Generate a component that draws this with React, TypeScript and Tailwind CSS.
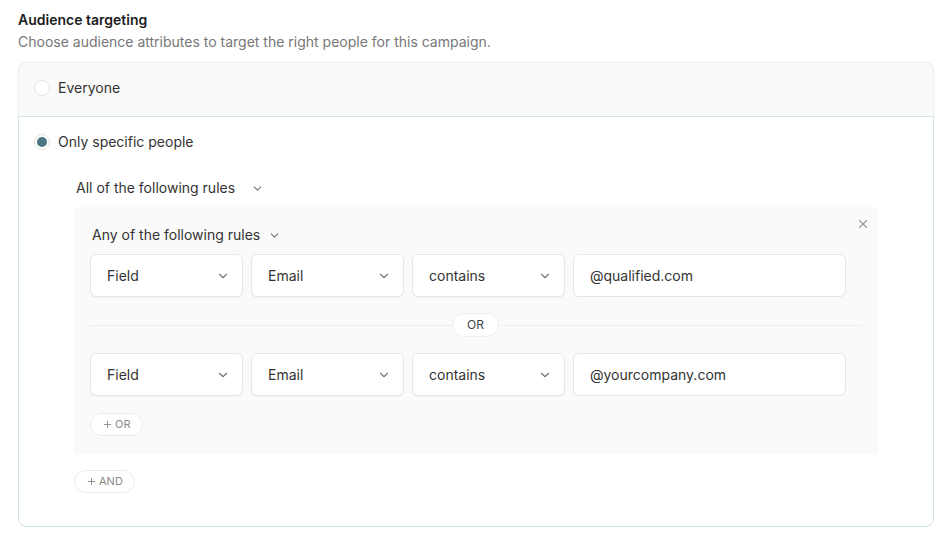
import { ChevronDown, X, Plus } from 'lucide-react';

function Radio({ checked }: { checked?: boolean }) {
    return (
        <span className="flex h-4 w-4 shrink-0 items-center justify-center rounded-full border border-[#e3e3e3] bg-white">
            {checked && <span className="h-[10px] w-[10px] rounded-full bg-[#4b7682]" />}
        </span>
    );
}

function Select({ label }: { label: string }) {
    return (
        <div className="flex h-[43px] w-[153px] items-center justify-between rounded-md border border-[#e6e6e6] bg-white pl-4 pr-3 text-sm text-[#333] shadow-[0_1px_1px_rgba(0,0,0,0.04)]">
            <span>{label}</span>
            <ChevronDown className="h-[14px] w-[14px] text-[#777]" strokeWidth={2} />
        </div>
    );
}

function RuleRow({ value }: { value: string }) {
    return (
        <div className="flex gap-2">
            <Select label="Field" />
            <Select label="Email" />
            <Select label="contains" />
            <div className="flex h-[43px] w-[273px] items-center rounded-md border border-[#e6e6e6] bg-white px-4 text-sm text-[#333]">
                {value}
            </div>
        </div>
    );
}

function AddPill({ label }: { label: string }) {
    return (
        <button className="flex h-[23px] items-center gap-[2px] rounded-full border border-[#ebebeb] bg-white px-[11px] text-[11px] text-[#8a8a8a]">
            <Plus className="h-[11px] w-[11px]" strokeWidth={2} />
            {label}
        </button>
    );
}

export default function App() {
    return (
        <div className="min-h-screen bg-white pl-[18px] pr-4 pt-[10px] font-['Inter',sans-serif]">
            <h2 className="text-sm font-semibold leading-5 text-[#1d1d1d]">Audience targeting</h2>
            <p className="mt-[2px] text-sm leading-5 text-[#777]">
                Choose audience attributes to target the right people for this campaign.
            </p>

            <div className="mt-[10px]">
                {/* Everyone option */}
                <div className="flex h-[54px] items-center gap-2 rounded-t-lg border border-b-0 border-[#efefef] bg-[#fafafa] pb-[3px] pl-[15px]">
                    <Radio />
                    <span className="text-sm text-[#333]">Everyone</span>
                </div>

                {/* Only specific people option */}
                <div className="rounded-b-lg border border-[#d3e5ea] pb-[33px] pl-[15px] pr-[55px] pt-[15px]">
                    <div className="flex h-5 items-center gap-2">
                        <Radio checked />
                        <span className="text-sm text-[#333]">Only specific people</span>
                    </div>

                    <div className="ml-10 mt-[26px]">
                        <div className="flex h-5 items-center gap-[16px] pl-[2px] text-sm text-[#333]">
                            All of the following rules
                            <ChevronDown className="h-[13px] w-[13px] text-[#777]" strokeWidth={2} />
                        </div>

                        <div className="relative mt-[9px] bg-[#fafafa] pb-[18px] pl-4 pr-[17px] pt-[18px]">
                            <X className="absolute right-[8px] top-[10px] h-[14px] w-[14px] text-[#9a9a9a]" strokeWidth={2} />

                            <div className="flex h-5 items-center gap-[8px] pl-[2px] text-sm text-[#333]">
                                Any of the following rules
                                <ChevronDown className="h-[13px] w-[13px] text-[#777]" strokeWidth={2} />
                            </div>

                            <div className="mt-[9px]">
                                <RuleRow value="@qualified.com" />
                            </div>

                            <div className="relative flex h-[56px] items-center justify-center">
                                <div className="absolute inset-x-0 top-[28px] h-px bg-[#ececec]" />
                                <span className="relative flex h-6 w-[47px] items-center justify-center rounded-full border border-[#ededed] bg-white text-xs text-[#444]">
                                    OR
                                </span>
                            </div>

                            <RuleRow value="@yourcompany.com" />

                            <div className="mt-[17px] flex">
                                <AddPill label="OR" />
                            </div>
                        </div>

                        <div className="mt-4 flex">
                            <AddPill label="AND" />
                        </div>
                    </div>
                </div>
            </div>
        </div>
    );
}
